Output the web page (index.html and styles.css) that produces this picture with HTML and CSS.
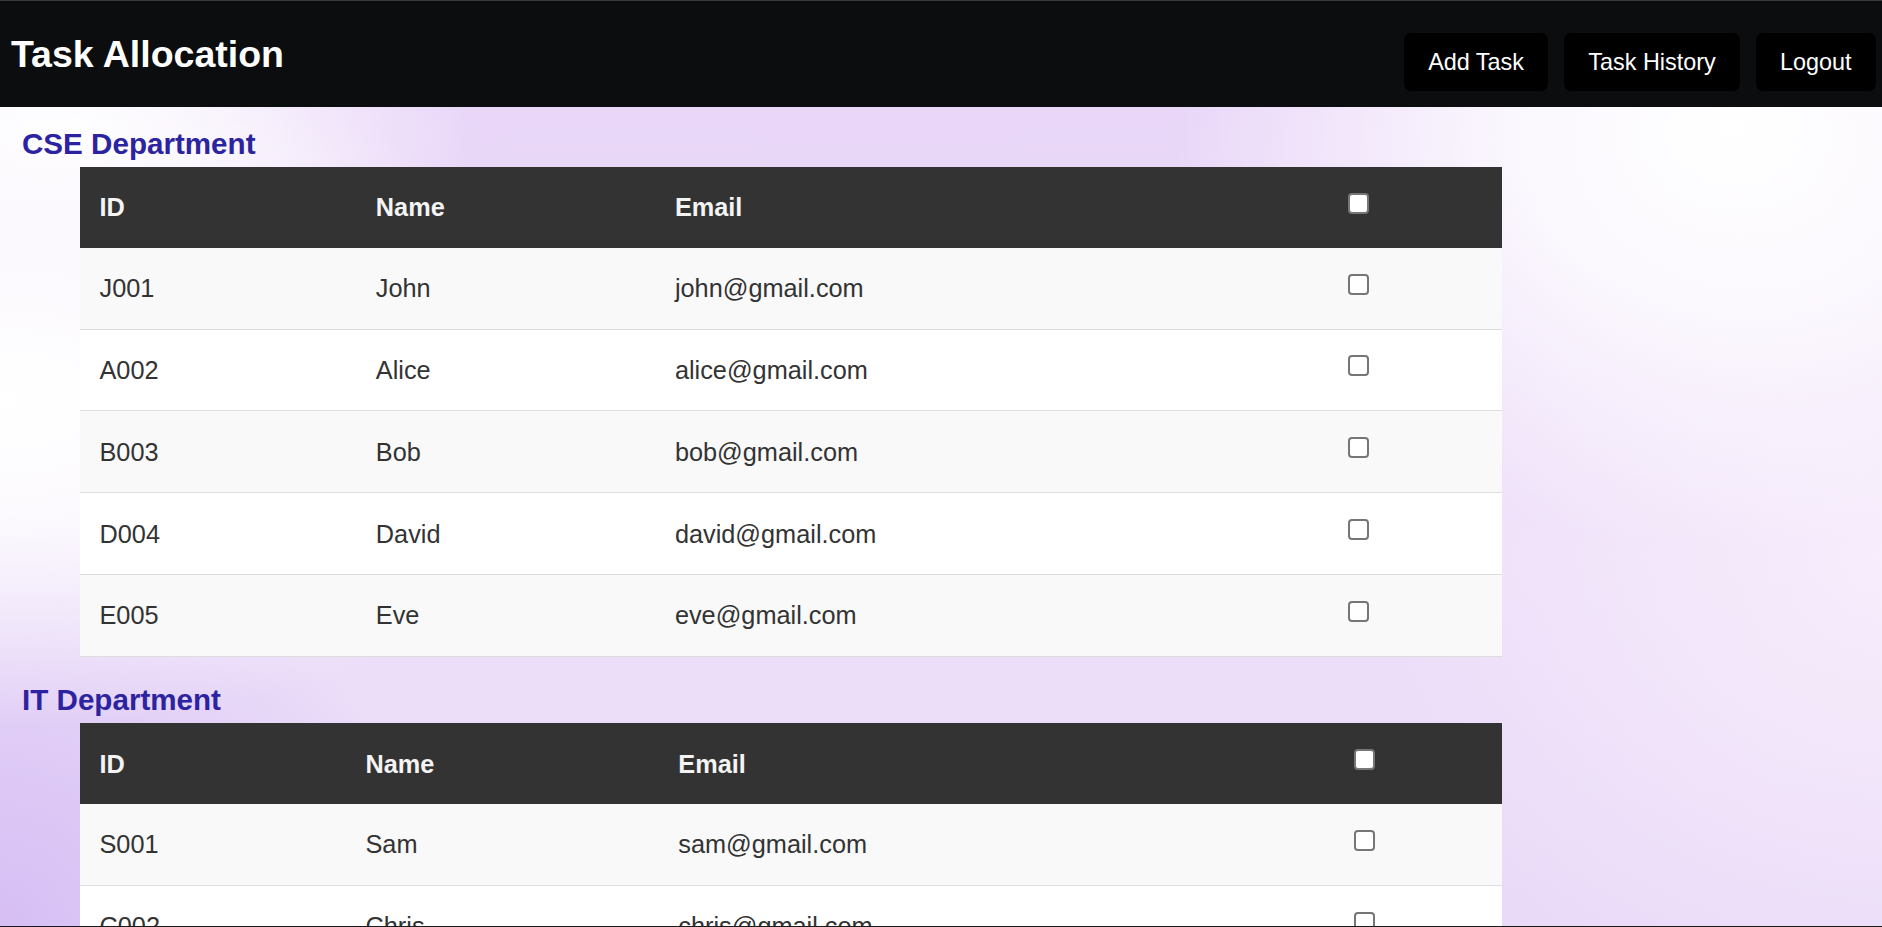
FILE: index.html
```html
<!DOCTYPE html>
<html lang="en">
<head>
<meta charset="utf-8">
<title>Task Allocation</title>
<link rel="stylesheet" href="styles.css">
</head>
<body>
<header class="topbar">
  <h1 class="brand">Task Allocation</h1>
  <nav class="actions">
    <button class="nav-btn">Add Task</button>
    <button class="nav-btn">Task History</button>
    <button class="nav-btn">Logout</button>
  </nav>
</header>
<main class="content">
  <section class="dept">
    <h3 class="dept-title">CSE Department</h3>
    <table class="staff">
      <colgroup>
        <col class="c1-id"><col class="c1-name"><col class="c1-email"><col class="c1-check">
      </colgroup>
      <thead>
        <tr><th>ID</th><th>Name</th><th>Email</th><th><input type="checkbox" class="box"></th></tr>
      </thead>
      <tbody>
        <tr><td>J001</td><td>John</td><td>john@gmail.com</td><td><input type="checkbox" class="box"></td></tr>
        <tr><td>A002</td><td>Alice</td><td>alice@gmail.com</td><td><input type="checkbox" class="box"></td></tr>
        <tr><td>B003</td><td>Bob</td><td>bob@gmail.com</td><td><input type="checkbox" class="box"></td></tr>
        <tr><td>D004</td><td>David</td><td>david@gmail.com</td><td><input type="checkbox" class="box"></td></tr>
        <tr><td>E005</td><td>Eve</td><td>eve@gmail.com</td><td><input type="checkbox" class="box"></td></tr>
      </tbody>
    </table>
  </section>
  <section class="dept">
    <h3 class="dept-title">IT Department</h3>
    <table class="staff">
      <colgroup>
        <col class="c2-id"><col class="c2-name"><col class="c2-email"><col class="c2-check">
      </colgroup>
      <thead>
        <tr><th>ID</th><th>Name</th><th>Email</th><th><input type="checkbox" class="box"></th></tr>
      </thead>
      <tbody>
        <tr><td>S001</td><td>Sam</td><td>sam@gmail.com</td><td><input type="checkbox" class="box"></td></tr>
        <tr><td>C002</td><td>Chris</td><td>chris@gmail.com</td><td><input type="checkbox" class="box"></td></tr>
        <tr><td>K003</td><td>Kate</td><td>kate@gmail.com</td><td><input type="checkbox" class="box"></td></tr>
      </tbody>
    </table>
  </section>
</main>
<div class="frame-edge"></div>
</body>
</html>
```
FILE: styles.css
```css
html {
  min-height: 100%;
}
body {
  margin: 0;
  min-height: 100vh;
  font-family: "Liberation Sans", Arial, sans-serif;
  background-color: #ead9f9;
  background-image:
    radial-gradient(ellipse 620px 330px at 0% 43%, rgba(255,255,255,1) 0%, rgba(255,255,255,0.85) 35%, rgba(255,255,255,0) 100%),
    radial-gradient(ellipse 560px 420px at 92% 14%, rgba(255,255,255,1) 0%, rgba(255,255,255,0.8) 40%, rgba(255,255,255,0) 100%),
    radial-gradient(ellipse 420px 180px at 3% 14%, rgba(255,255,255,1) 0%, rgba(255,255,255,0.7) 40%, rgba(255,255,255,0) 100%),
    radial-gradient(ellipse 500px 500px at 100% 60%, rgba(248,238,252,0.9) 0%, rgba(248,238,252,0) 100%),
    radial-gradient(ellipse 420px 420px at 0% 100%, rgba(214,190,244,1) 0%, rgba(214,190,244,0) 100%),
    linear-gradient(180deg, #e8d4f8 0%, #eddff9 60%, #e9daf8 100%);
  background-attachment: fixed;
}

.topbar {
  display: flex;
  justify-content: space-between;
  align-items: center;
  height: 106px;
  padding: 0 6px 0 11px;
  background: #0c0d0f;
  border-top: 1px solid #3a3a3c;
}
.brand {
  margin: 0;
  color: #ffffff;
  font-size: 37.5px;
  font-weight: bold;
}
.actions {
  display: flex;
  gap: 15.6px;
  margin-top: 16px;
}
.nav-btn {
  font-family: "Liberation Sans", Arial, sans-serif;
  font-size: 23.4px;
  color: #ffffff;
  background: #000000;
  border: none;
  border-radius: 7px;
  padding: 15.5px 24.4px;
  line-height: normal;
  cursor: pointer;
}

.content {
  padding: 0 0 0 22px;
}
.dept-title {
  margin: 20px 0 6px 0;
  font-size: 29.6px;
  font-weight: bold;
  color: #2c23a0;
}
.staff {
  margin: 0 0 26.5px 58px;
  width: 1422px;
  border-collapse: collapse;
  table-layout: fixed;
  font-size: 25.3px;
}
.staff th,
.staff td {
  text-align: left;
  padding: 25.9px 19.5px;
  line-height: 28px;
}
.staff th {
  background: #333333;
  color: #f4f4f4;
  font-weight: bold;
}
.staff td {
  color: #333333;
  border-bottom: 1px solid #dddddd;
}
.staff tbody tr:nth-child(odd) td {
  background: #f9f9f9;
}
.staff tbody tr:nth-child(even) td {
  background: #ffffff;
}

.c1-id { width: 276.3px; }
.c1-name { width: 299.1px; }
.c1-email { width: 673.4px; }
.c1-check { width: 173.2px; }
.c2-id { width: 266px; }
.c2-name { width: 312.8px; }
.c2-email { width: 676.1px; }
.c2-check { width: 167.1px; }

.box {
  appearance: none;
  -webkit-appearance: none;
  box-sizing: border-box;
  width: 21px;
  height: 21px;
  margin: 0 0 3px 0;
  border: 2px solid #767676;
  border-radius: 4px;
  background: #ffffff;
  vertical-align: baseline;
}

.frame-edge {
  position: fixed;
  left: 0;
  right: 0;
  bottom: 0;
  height: 1px;
  background: #1a1a1a;
}
```
